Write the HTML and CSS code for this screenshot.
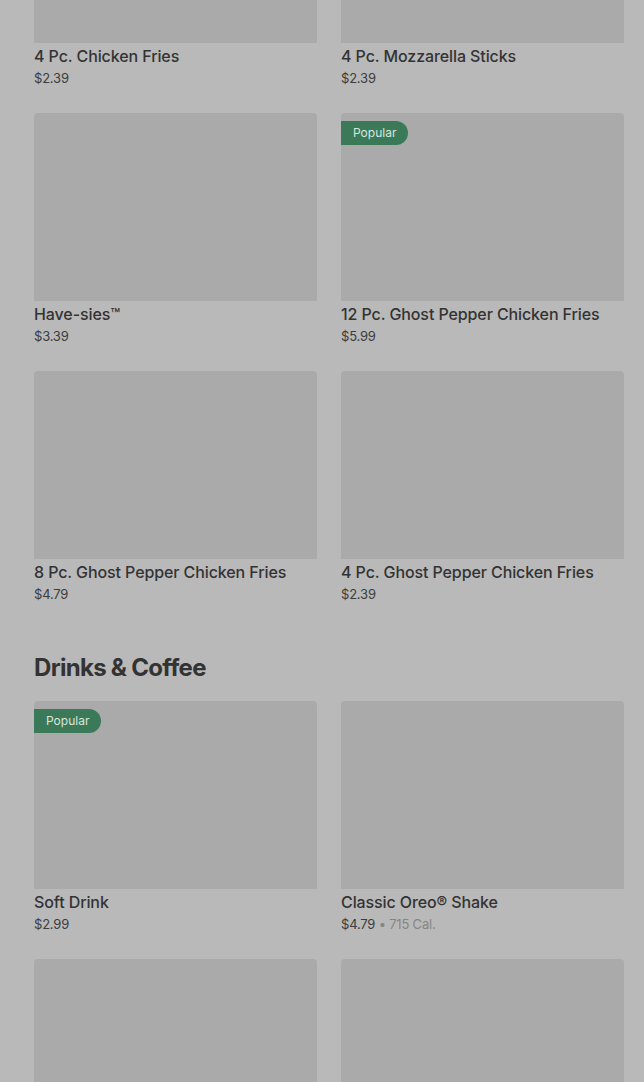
FILE: index.html
```html
<!DOCTYPE html>
<html lang="en">
<head>
    <meta charset="UTF-8">
    <meta name="viewport" content="width=device-width, initial-scale=1.0">
    <title>Menu</title>
    <link rel="stylesheet" href="styles.css">
</head>
<body>
  <div class="menu">
    <section class="category">
      <div class="grid">
        <div class="item">
          <div class="thumb"></div>
          <div class="name">4 Pc. Chicken Fries</div>
          <div class="price">$2.39</div>
        </div>
        <div class="item">
          <div class="thumb"></div>
          <div class="name">4 Pc. Mozzarella Sticks</div>
          <div class="price">$2.39</div>
        </div>
        <div class="item">
          <div class="thumb"></div>
          <div class="name">Have-sies™</div>
          <div class="price">$3.39</div>
        </div>
        <div class="item">
          <div class="thumb"><span class="badge">Popular</span></div>
          <div class="name">12 Pc. Ghost Pepper Chicken Fries</div>
          <div class="price">$5.99</div>
        </div>
        <div class="item">
          <div class="thumb"></div>
          <div class="name">8 Pc. Ghost Pepper Chicken Fries</div>
          <div class="price">$4.79</div>
        </div>
        <div class="item">
          <div class="thumb"></div>
          <div class="name">4 Pc. Ghost Pepper Chicken Fries</div>
          <div class="price">$2.39</div>
        </div>
      </div>
    </section>

    <section class="category">
      <h2>Drinks &amp; Coffee</h2>
      <div class="grid">
        <div class="item">
          <div class="thumb"><span class="badge">Popular</span></div>
          <div class="name">Soft Drink</div>
          <div class="price">$2.99</div>
        </div>
        <div class="item">
          <div class="thumb"></div>
          <div class="name">Classic Oreo® Shake</div>
          <div class="price">$4.79 <span class="cal">• 715 Cal.</span></div>
        </div>
        <div class="item">
          <div class="thumb"></div>
        </div>
        <div class="item">
          <div class="thumb"></div>
        </div>
      </div>
    </section>
  </div>
</body>
</html>
```

FILE: styles.css
```css
body {
  margin: 0;
  background-color: #b9b9b9;
  font-family: 'Inter', 'Roboto', sans-serif;
  color: #333;
  overflow: hidden;
}

.menu {
  padding: 0 20px 0 34px;
  margin-top: -145px;
}

.grid {
  display: grid;
  grid-template-columns: 283px 283px;
  column-gap: 24px;
  row-gap: 26px;
}

.thumb {
  position: relative;
  height: 188px;
  background-color: #aaaaaa;
  border-radius: 4px 4px 0 0;
}

.badge {
  position: absolute;
  top: 8px;
  left: 0;
  padding: 0 12px;
  height: 24px;
  line-height: 24px;
  font-size: 12px;
  color: #d9e6de;
  background-color: #3a7a58;
  border-radius: 0 12px 12px 0;
}

.name {
  margin-top: 3px;
  font-size: 16px;
  line-height: 20px;
  font-weight: 500;
  letter-spacing: -0.1px;
  color: #333;
  white-space: nowrap;
}

.price {
  margin-top: 3px;
  font-size: 13px;
  line-height: 18px;
  letter-spacing: -0.2px;
  color: #3c3c3c;
}

.cal {
  color: #858585;
}

.category h2 {
  margin: 49px 0 17px;
  font-size: 24px;
  line-height: 32px;
  font-weight: 700;
  letter-spacing: -0.7px;
  color: #333;
}
```
